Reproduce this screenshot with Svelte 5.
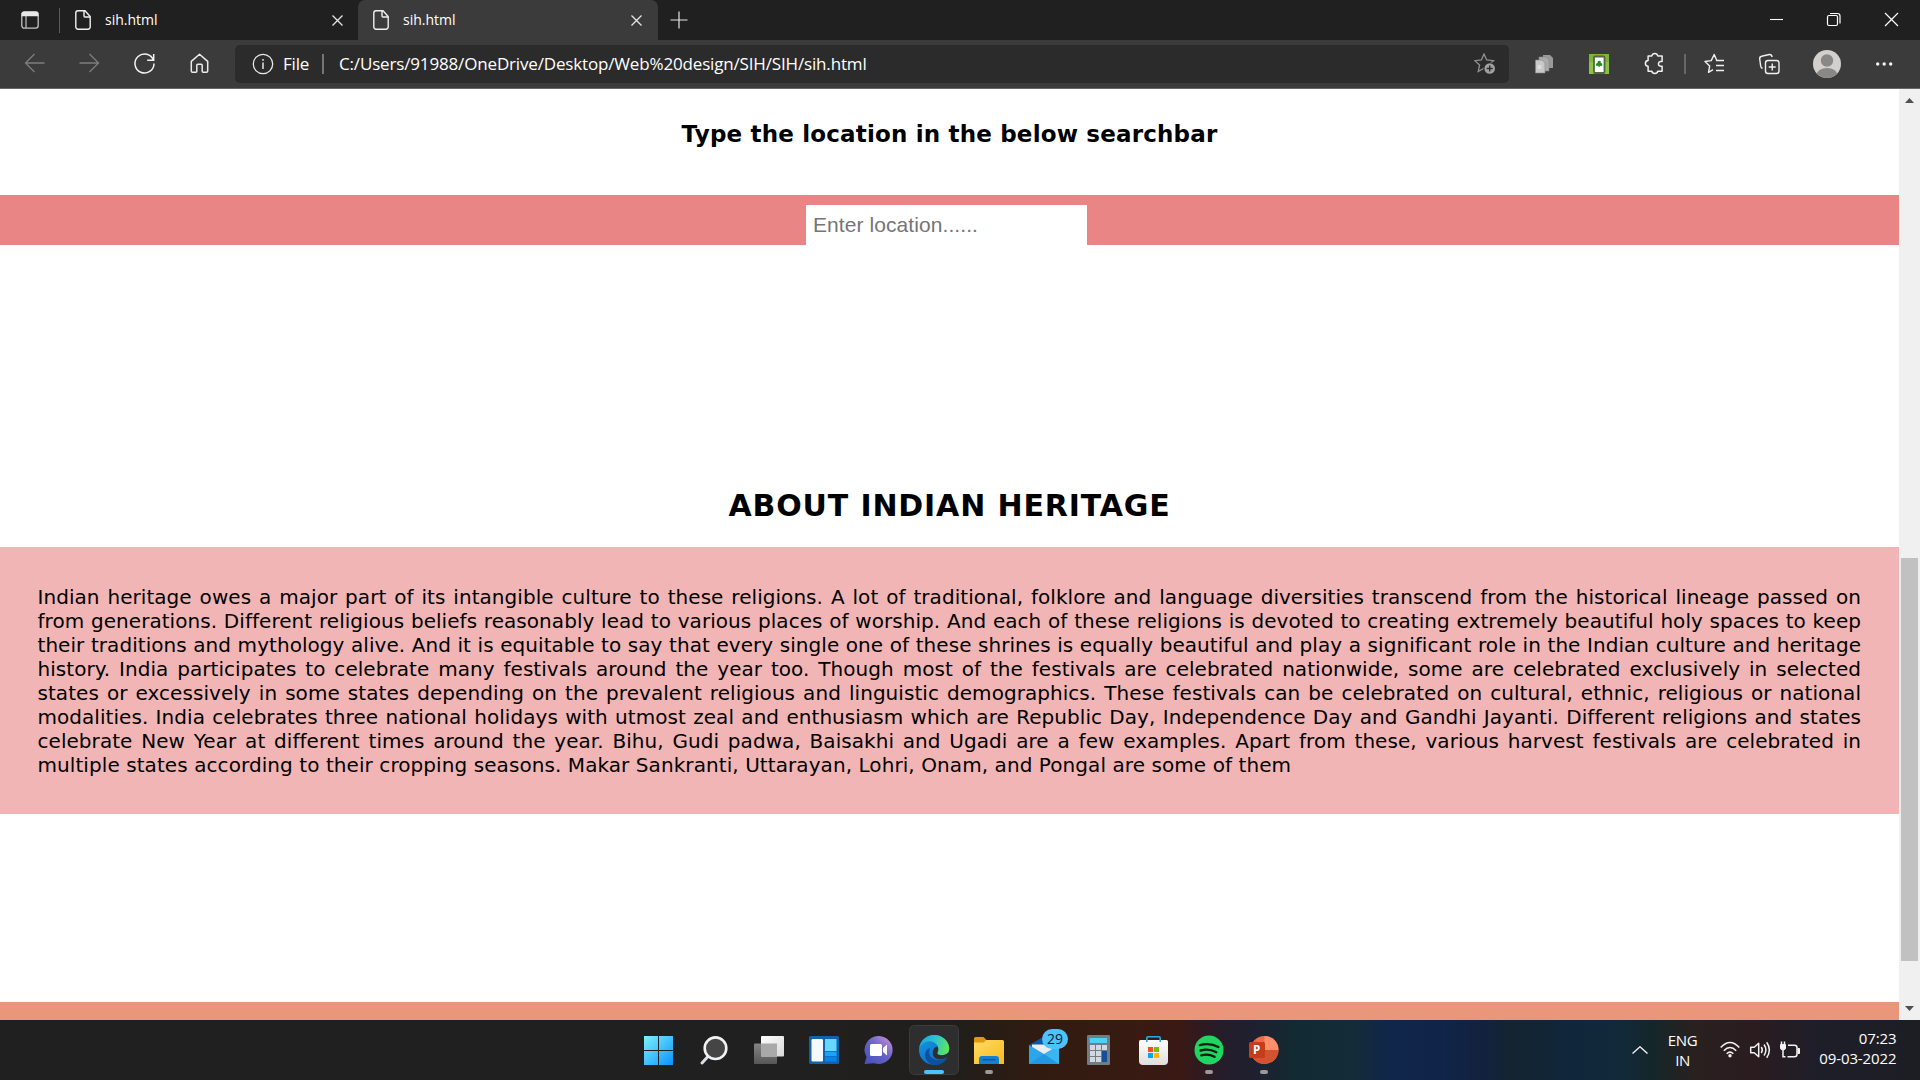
<script>
  const tabs = [
    { title: 'sih.html', active: false },
    { title: 'sih.html', active: true }
  ];

  const lines = [
    'Indian heritage owes a major part of its intangible culture to these religions. A lot of traditional, folklore and language diversities transcend from the historical lineage passed on',
    'from generations. Different religious beliefs reasonably lead to various places of worship. And each of these religions is devoted to creating extremely beautiful holy spaces to keep',
    'their traditions and mythology alive. And it is equitable to say that every single one of these shrines is equally beautiful and play a significant role in the Indian culture and heritage',
    'history. India participates to celebrate many festivals around the year too. Though most of the festivals are celebrated nationwide, some are celebrated exclusively in selected',
    'states or excessively in some states depending on the prevalent religious and linguistic demographics. These festivals can be celebrated on cultural, ethnic, religious or national',
    'modalities. India celebrates three national holidays with utmost zeal and enthusiasm which are Republic Day, Independence Day and Gandhi Jayanti. Different religions and states',
    'celebrate New Year at different times around the year. Bihu, Gudi padwa, Baisakhi and Ugadi are a few examples. Apart from these, various harvest festivals are celebrated in',
    'multiple states according to their cropping seasons. Makar Sankranti, Uttarayan, Lohri, Onam, and Pongal are some of them'
  ];
</script>

<div class="screen">
  <header class="titlebar">
    <div class="tab-menu">
      <svg width="18" height="18" viewBox="0 0 18 18">
        <rect x=".8" y=".8" width="16.4" height="16.4" rx="2.6" fill="none" stroke="#c4c4c4" stroke-width="1.3" />
        <path d="M.6 5.2V3Q.6.4 3.2.4h11.6Q17.4.4 17.4 3v2.2z" fill="#e8e8e8" />
        <path d="M5 5v12" stroke="#c4c4c4" stroke-width="1.2" />
      </svg>
    </div>
    {#each tabs as tab}
      <div class="tab" class:active={tab.active}>
        <svg class="file" width="16" height="20" viewBox="0 0 16 20" fill="none" stroke="#efefef" stroke-width="1.4">
          <path d="M3 .8h7l5.2 5.6V17a2.2 2.2 0 0 1-2.2 2.2H3A2.2 2.2 0 0 1 .8 17V3A2.2 2.2 0 0 1 3 .8z" />
          <path d="M9 1v5q0 1 1 1h5" />
        </svg>
        <span class="tab-title">{tab.title}</span>
        <svg class="tab-close" width="11" height="11" viewBox="0 0 11 11" stroke="#e6e6e6" stroke-width="1.3">
          <path d="M.5.5l10 10M10.500.5l-10 10" />
        </svg>
      </div>
    {/each}
    <svg class="plus" width="18" height="18" viewBox="0 0 18 18" stroke="#e6e6e6" stroke-width="1.2">
      <path d="M9 .5v17M.5 9h17" />
    </svg>
    <div class="window-buttons">
      <svg width="58" height="38" viewBox="0 0 58 38" stroke="#fff" stroke-width="1.1"><path d="M24 19.500h13" /></svg>
      <svg width="58" height="38" viewBox="0 0 58 38" fill="none" stroke="#fff" stroke-width="1.2">
        <rect x="23.500" y="15.500" width="10" height="10" rx="1.500" />
        <path d="M26 13.500h7.500a2.500 2.500 0 0 1 2.500 2.500v7.500" />
      </svg>
      <svg width="58" height="38" viewBox="0 0 58 38" stroke="#fff" stroke-width="1.2"><path d="M23 13l13 13m0-13l-13 13" /></svg>
    </div>
  </header>

  <div class="toolbar">
    <svg class="cell" viewBox="0 0 55 48" fill="none" stroke="#7d7d7d" stroke-width="1.3"><path d="M37.500 23h-19m9-9l-9 9 9 9" /></svg>
    <svg class="cell" viewBox="0 0 55 48" fill="none" stroke="#7d7d7d" stroke-width="1.3"><path d="M17.500 23h19m-9-9l9 9-9 9" /></svg>
    <svg class="cell" viewBox="0 0 55 48" fill="none" stroke="#f2f2f2" stroke-width="1.5"><path d="M36.500 20.500a9.500 9.500 0 1 0 .5 3M36.700 14v6.300h-6.500" /></svg>
    <svg class="cell" viewBox="0 0 55 48" fill="none" stroke="#ececec" stroke-width="1.5" stroke-linejoin="round"><path d="M27.500 14.200l8.200 7.200V31q0 1.300-1.300 1.300h-3.200q-1 0-1-1v-6.100q0-1-1-1h-3.400q-1 0-1 1v6.100q0 1-1 1h-3.200q-1.300 0-1.300-1.300v-9.600z" /></svg>

    <div class="address">
      <svg width="22" height="22" viewBox="0 0 22 22" fill="none" stroke="#e8e8e8" stroke-width="1.3">
        <circle cx="11" cy="11" r="9.700" /><path d="M11 9.500v6.500M11 6v1.800" stroke-width="1.500" />
      </svg>
      <span class="scheme">File</span>
      <i class="bar"></i>
      <span class="url">C:/Users/91988/OneDrive/Desktop/Web%20design/SIH/SIH/sih.html</span>
      <svg class="add-favorite" width="22" height="22" viewBox="0 0 22 22">
        <path d="M10 1l2.700 6 6.800.700-5.100 4.300 1.400 6.500L10 15.200l-5.800 3.300 1.400-6.500L.8 7.700 7.400 7z" fill="none" stroke="#919191" stroke-width="1.300" />
        <circle cx="15.700" cy="15.500" r="6.200" fill="#2b2b2b" /><circle cx="15.700" cy="15.500" r="5.300" fill="#a0a0a0" />
        <path d="M15.700 12.500v6m-3-3h6" stroke="#2b2b2b" stroke-width="1.400" />
      </svg>
    </div>

    <svg class="cell" viewBox="0 0 55 48">
      <path d="M26 15h7l3 3v10H26z" fill="#999" /><path d="M22 17h7l3 3v11H22z" fill="#aaa" stroke="#888" stroke-width=".6" /><path d="M18.500 20h6.500l3 3v10h-9.500z" fill="#c8c8c8" stroke="#888" stroke-width=".6" /><path d="M20.500 25h4v4h-4z" fill="#ddd" />
    </svg>
    <svg class="cell" viewBox="0 0 55 48">
      <rect x="17" y="14" width="20" height="20" fill="#8bc34a" /><path d="M17 14h20v8H17z" fill="#7cb53c" />
      <rect x="22" y="16.500" width="10.500" height="16.500" rx="1" fill="#fff" stroke="#55653f" stroke-width="1.800" />
      <path d="M27.200 20.800a1.600 1.600 0 0 1 1.400 2.200 1.500 1.500 0 1 1-.8 2.500l.4 1.300h-2l.4-1.300a1.500 1.500 0 1 1-.8-2.500 1.600 1.600 0 0 1 1.400-2.200z" fill="#17931f" />
    </svg>
    <svg class="cell" viewBox="0 0 55 48" fill="none" stroke="#f0f0f0" stroke-width="1.500" stroke-linejoin="round">
      <path d="M21.500 16.500h3.700q.6-2.500 3-2.500t3 2.500h4.300v5.700h-1.600q-2.100.4-2.100 2.300t2.100 2.300h1.600v5h-4.300q-.6 2.200-3 2.200t-3-2.200h-3.700v-5q-2.700-.3-2.700-2.800t2.700-2.800z" transform="translate(-.4 -.6)" />
    </svg>
    <i class="divider"></i>
    <svg class="cell" viewBox="0 0 55 48" fill="none" stroke="#f0f0f0" stroke-width="1.400" stroke-linejoin="round">
      <path d="M30.300 20.200h-.6L27.200 14.500l-3 6.100-6.200.9 4.700 4.400-1.200 6.500 4.500-2.700M37 20.500h-8M37 25.500h-8M37 30.500h-8" />
    </svg>
    <svg class="cell" viewBox="0 0 55 48" fill="none" stroke="#f0f0f0" stroke-width="1.400">
      <rect x="23.500" y="20.500" width="13.500" height="13" rx="2.500" /><path d="M30.250 23.500v7M26.700 27h7M20.500 28.500q-1.500-.6-1.800-2.300L17.700 19q-.2-2.300 1.900-2.700l7.700-1.800q2.300-.3 2.900 2.500" />
    </svg>
    <svg class="avatar" width="61" height="48" viewBox="0 0 61 48">
      <defs><clipPath id="face"><circle cx="30" cy="24" r="14" /></clipPath></defs>
      <g clip-path="url(#face)"><path d="M15 9h30v30H15z" fill="#d2d0ce" /><circle cx="30" cy="20.500" r="6.200" fill="#8a8886" /><ellipse cx="30" cy="35" rx="10.500" ry="7" fill="#8a8886" /></g>
    </svg>
    <svg class="more" width="53" height="48" viewBox="0 0 53 48" fill="#f2f2f2"><circle cx="19.700" cy="24" r="1.700" /><circle cx="26.200" cy="24" r="1.700" /><circle cx="32.700" cy="24" r="1.700" /></svg>
  </div>

  <main class="viewport">
    <div class="page">
      <h2>Type the location in the below searchbar</h2>
      <div class="search-band"><input placeholder="Enter location......" /></div>
      <h1>ABOUT INDIAN HERITAGE</h1>
      <section class="about">
        {#each lines as line, i}
          <div class="line" class:last={i === lines.length - 1}>{line}</div>
        {/each}
      </section>
      <div class="footer-strip"></div>
    </div>
    <div class="scrollbar">
      <svg width="9" height="5" viewBox="0 0 9 5"><path d="M0 5L4.500 0 9 5z" fill="#505050" /></svg>
      <div class="thumb"></div>
      <svg width="9" height="5" viewBox="0 0 9 5"><path d="M0 0l4.500 5L9 0z" fill="#505050" /></svg>
    </div>
  </main>

  <footer class="taskbar">
    <div class="apps">
      <svg class="app" viewBox="0 0 55 60">
        <defs><linearGradient id="win" gradientUnits="userSpaceOnUse" x1="13" y1="16" x2="42" y2="45"><stop stop-color="#7df0ff" /><stop offset="1" stop-color="#0a93fb" /></linearGradient></defs>
        <path d="M13 16h14v14H13zM28 16h14v14H28zM13 31h14v14H13zM28 31h14v14H28z" fill="url(#win)" />
      </svg>
      <svg class="app" viewBox="0 0 55 60">
        <path d="M22 36.500l-6 6.500" stroke="#dce0e4" stroke-width="3" stroke-linecap="round" /><circle cx="29.500" cy="28.200" r="10.800" fill="#454545" stroke="#f0f2f3" stroke-width="2.600" />
      </svg>
      <svg class="app" viewBox="0 0 55 60">
        <defs><linearGradient id="tv" x2="1" y2="1"><stop stop-color="#fff" /><stop offset="1" stop-color="#d8d8d8" /></linearGradient><linearGradient id="tb" x2="0" y2="1"><stop stop-color="#858585" /><stop offset="1" stop-color="#565656" /></linearGradient></defs>
        <rect x="13" y="23.500" width="23" height="20.500" rx="1" fill="url(#tb)" /><rect x="20" y="16" width="23" height="20.500" rx="1" fill="url(#tv)" /><path d="M20 23.500h16v13H20z" fill="#a9a9a9" />
      </svg>
      <svg class="app" viewBox="0 0 55 60">
        <rect x="13" y="16" width="30" height="28" rx="1.500" fill="#0f62ad" /><rect x="15.500" y="19" width="11.500" height="22.500" rx="1.200" fill="#f7f8fa" />
        <path d="M29 19h11.500v12H29z" fill="#66d6ff" /><path d="M29 31.700h11.500v4.500H29z" fill="#18a4f8" /><path d="M29 36.800h11.500v4.700H29z" fill="#0883ec" />
      </svg>
      <svg class="app" viewBox="0 0 55 60">
        <defs><linearGradient id="chat" x1=".1" y1=".9" x2=".8" y2=".1"><stop stop-color="#4b53bc" /><stop offset=".55" stop-color="#6663c6" /><stop offset="1" stop-color="#b385d5" /></linearGradient></defs>
        <path d="M28 16a14 14 0 1 1-5 27.200L13.500 44l2-7A14 14 0 0 1 28 16z" fill="url(#chat)" /><rect x="19" y="24" width="12" height="12" rx="1.500" fill="#fff" /><path d="M32 28l4-3.500v11L32 32z" fill="#fff" />
      </svg>
      <svg class="app" viewBox="0 0 55 60">
        <defs>
          <linearGradient id="e1" x1="0" y1=".4" x2="1" y2=".6"><stop stop-color="#1ba6df" /><stop offset=".5" stop-color="#31c3cf" /><stop offset="1" stop-color="#65e64f" /></linearGradient>
          <linearGradient id="e2" x2=".7" y2="1"><stop stop-color="#1999e2" /><stop offset="1" stop-color="#0869ca" /></linearGradient>
        </defs>
        <rect x="3.500" y="5.500" width="49" height="49" rx="5" fill="#2e2e2e" stroke="#3c3c3c" />
        <circle cx="28" cy="30" r="15" fill="url(#e2)" />
        <path d="M24 28c-3 7 2 12 8 12 4 0 7-1.500 9.400-2.500C38 44 32 46 27 44.800c-6-1.500-9-7-7.500-12 .8-2.500 2.200-4.200 4.500-4.800z" fill="#0e4f9e" />
        <path d="M13.200 28C14.500 20 21 15 28 15c9 0 15 6.500 15.300 13 .2 5-3.800 7.300-7.500 7.300-3 0-5.300-1.200-4.300-3 1.500-2.500 1.200-6-1.500-8.500-5-4.500-13-2.800-16.800 4.200z" fill="url(#e1)" />
        <path d="M31.500 26.500c1.200 2.300.8 4.300 0 5.800-1 1.800 1.300 3 4.300 3 2.700 0 5-1 6.500-2.700l2 3.500-3.500 1.500c-3 1.500-5.500 2-8.500 1.500-5-.8-6.500-5-5-9.200.8-2 2-3.100 4.200-3.400z" fill="#2e2e2e" />
        <rect x="18" y="50" width="20" height="4" rx="2" fill="#4cc2ff" />
      </svg>
      <svg class="app" viewBox="0 0 55 60">
        <defs><linearGradient id="fold" x2="1" y2="1"><stop stop-color="#ffdb68" /><stop offset="1" stop-color="#f8b91b" /></linearGradient></defs>
        <path d="M13 18.500q0-1.500 1.500-1.500h8l3 3H42v8H13z" fill="#dd9a0a" /><path d="M13 22.500h9.500l3-2.500h16q1.500 0 1.500 1.500V44H13z" fill="url(#fold)" />
        <path d="M18 44v-5q0-3 3-3h14q3 0 3 3v5z" fill="#1580d2" /><path d="M21.500 39.700h13" stroke="#0b5796" stroke-width="1.300" /><rect class="dot" x="24" y="50" width="8" height="4" rx="2" />
      </svg>
      <svg class="app" viewBox="0 0 55 60">
        <path d="M13 25l15-8.500L43 25v7H13z" fill="#0c56a2" /><path d="M16 24.500h24v13H16z" fill="#ececec" /><path d="M13 25v19h30V25L28 34z" fill="#2ba5eb" /><path d="M13 44l15-10 15 10z" fill="#1a88d8" opacity=".45" /><path d="M28 34l15-9v19z" fill="#4ccaf7" opacity=".45" />
        <rect x="26" y="9" width="26" height="20" rx="10" fill="#4cc2ff" /><text x="39" y="24" text-anchor="middle" class="badge">29</text>
      </svg>
      <svg class="app" viewBox="0 0 55 60">
        <rect x="16" y="15" width="23" height="30" rx="1.200" fill="#737b83" /><rect x="18.700" y="18" width="17.300" height="5" fill="#48d3f6" />
        <g fill="#d1d8df"><path d="M19 25h5v5h-5zM25 25h5v5h-5zM31 25h5v5h-5zM19 31h5v5h-5zM25 31h5v5h-5zM19 37h5v5h-5zM25 37h5v5h-5z" /></g><path d="M31 31h5v11h-5z" fill="#174f96" />
      </svg>
      <svg class="app" viewBox="0 0 55 60">
        <defs><linearGradient id="bag" x2="0" y2="1"><stop stop-color="#fff" /><stop offset="1" stop-color="#dedede" /></linearGradient></defs>
        <path d="M13 21.500q0-1.500 1.500-1.500h26q1.500 0 1.500 1.500V41q0 4-4 4H17q-4 0-4-4z" fill="url(#bag)" /><path d="M20.800 22v-4q0-1.200 1.200-1.200h11q1.200 0 1.200 1.200v4" fill="none" stroke="#29abe6" stroke-width="1.600" />
        <path d="M22 27h5v5h-5z" fill="#f25022" /><path d="M28 27h5v5h-5z" fill="#7fba00" /><path d="M22 33h5v5h-5z" fill="#00a4ef" /><path d="M28 33h5v5h-5z" fill="#ffb900" />
      </svg>
      <svg class="app" viewBox="0 0 55 60">
        <circle cx="28" cy="30" r="14.500" fill="#1ed760" /><path d="M18.800 25.200q10.200-2.800 18.600 1.800M19.500 30.500q8.500-2.300 15.800 1.700M20.300 35.300q7.200-1.800 13.200 1.500" fill="none" stroke="#101b14" stroke-width="2.400" stroke-linecap="round" /><rect class="dot" x="24" y="50" width="8" height="4" rx="2" />
      </svg>
      <svg class="app" viewBox="0 0 55 60">
        <circle cx="28.500" cy="30" r="14" fill="#ed6c47" /><path d="M28.500 16a14 14 0 0 1 14 14h-14z" fill="#ff8f6b" /><path d="M14.500 30h28a14 14 0 0 1-28 0z" fill="#d35230" /><rect x="13" y="22" width="16" height="16" rx="1.500" fill="#c43e1c" /><text x="20.500" y="34.300" text-anchor="middle" class="letter">P</text><rect class="dot" x="24" y="50" width="8" height="4" rx="2" />
      </svg>
    </div>
    <div class="tray">
      <svg width="16" height="8" viewBox="0 0 16 8" fill="none" stroke="#f0f0f0" stroke-width="1.400"><path d="M.5 7.500L8 .8l7.500 6.700" /></svg>
      <div class="lang">ENG<br />IN</div>
      <svg class="status" width="82" height="20" viewBox="0 0 82 20" fill="none" stroke="#f2f2f2" stroke-width="1.500">
        <path d="M.7 7.500q9.300-10 18.600 0M3.800 10.700q6.200-6.400 12.400 0M6.700 13.700q3.300-3.200 6.600 0" /><circle cx="10" cy="15.700" r="1.700" fill="#f2f2f2" stroke="none" />
        <path d="M30.700 7.200h3.500l4.500-4v13.600l-4.500-4h-3.500z" stroke-linejoin="round" /><path d="M41.300 7q2 3 0 6M44 4.500q3.800 5.500 0 11M46.700 2.300q5.300 7.700 0 15.400" />
        <path d="M67.500 16.800h7q2.500 0 2.500-2.500v-6.600q0-2.500-2.500-2.500h-6.500" /><path d="M78 8.500h1.500v5H78z" fill="#f2f2f2" stroke-width="1" /><path d="M60.500 4.500h5v3.500q0 2-2.500 2t-2.500-2z" fill="#f2f2f2" stroke-width="1" /><path d="M61.500 4.500v-3M64.500 4.500v-3M63 10v6.800h2.500" />
      </svg>
      <div class="clock">07:23<br />09-03-2022</div>
    </div>
  </footer>
</div>

<style>
  :global(body) { margin: 0; overflow: hidden; }
  .screen { width: 1920px; height: 1080px; display: flex; flex-direction: column; overflow: hidden; background: #fff; font-family: 'Open Sans', sans-serif; }
  svg { display: block; flex: none; }
  h1, h2 { margin: 0; color: #000; text-align: center; white-space: nowrap; font-family: 'DejaVu Sans', sans-serif; }

  .titlebar { height: 40px; flex: none; display: flex; background: #202020; }
  .tab-menu { width: 60px; box-sizing: border-box; padding: 11px 0 0 21px; position: relative; }
  .tab-menu::after { content: ''; position: absolute; right: 0; top: 8px; width: 1px; height: 25px; background: #5c5c5c; }
  .tab { width: 298px; box-sizing: border-box; display: flex; align-items: center; padding: 0 15px; color: #fff; font-size: 14px; }
  .tab.active { width: 300px; background: #3b3b3b; border-radius: 7px 7px 0 0; padding-right: 16px; }
  .tab-title { flex: 1; margin-left: 14px; line-height: 20px; padding-bottom: 1px; }
  .plus { margin: 10.5px 0 0 12px; }
  .window-buttons { margin-left: auto; display: flex; }

  .toolbar { height: 49px; box-sizing: border-box; flex: none; display: flex; background: #3b3b3b; border-bottom: 1px solid #676767; padding-left: 7px; }
  .cell { width: 55px; height: 48px; }
  .address { width: 1274px; height: 38px; box-sizing: border-box; margin: 5px 7.5px 0 8px; padding: 0 13px 0 17px; display: flex; align-items: center; border-radius: 5px; background: #2b2b2b; color: #fff; font-size: 17px; }
  .scheme { margin-left: 9px; width: 27px; letter-spacing: -.2px; padding-bottom: 2px; }
  .bar { width: 2px; height: 20px; background: #757575; margin: 0 15px 0 12px; }
  .url { letter-spacing: -.16px; flex: 1; white-space: nowrap; padding-bottom: 2px; }
  .divider { width: 2px; height: 20px; margin: 14px 1px 0 2.500px; background: #676767; flex: none; }

  .viewport { height: 931px; flex: none; display: flex; }
  .page { width: 1899px; display: flex; flex-direction: column; overflow: hidden; background: #fff; }
  h2 { padding-top: 31px; height: 75px; line-height: 28px; font-size: 23px; letter-spacing: .18px; }
  .search-band { height: 50px; box-sizing: border-box; padding-top: 10px; flex: none; background: #e98585; display: flex; justify-content: center; overflow: hidden; }
  input { width: 281px; height: 40px; margin-right: 6px; box-sizing: border-box; padding: 0 7px; border: 0; border-radius: 0; background: #fff; font: 21px 'Liberation Sans', Arial, sans-serif; letter-spacing: .08px; }
  input::placeholder { color: #757575; opacity: 1; }
  h1 { padding-top: 243px; height: 59px; line-height: 36px; font-size: 30px; letter-spacing: .85px; }
  .about { height: 267px; box-sizing: border-box; padding: 38px 38px 0 37.5px; flex: none; background: #f2b5b5; color: #000; font-family: 'DejaVu Sans', sans-serif; font-size: 20px; }
  .line { line-height: 24px; height: 24px; white-space: nowrap; letter-spacing: .05px; text-align: justify; text-align-last: justify; }
  .line.last { text-align-last: left; letter-spacing: .075px; }
  .footer-strip { margin-top: auto; height: 18px; flex: none; background: #e9967a; }

  .scrollbar { width: 21px; background: #f0f0f0; display: flex; flex-direction: column; align-items: center; box-sizing: border-box; padding: 9px 0; }
  .thumb { width: 17px; height: 403px; margin: 455px 0 auto; background: #c1c1c1; }

  .taskbar { height: 60px; flex: none; display: flex; align-items: center; background: linear-gradient(90deg, #202020 0, #202020 800px, #211e1a 960px, #311b11 1040px, #381b12 1140px, #3a1814 1180px, #261c2a 1220px, #1d2130 1260px, #122a33 1297px, #142c38 1352px, #10264a 1389px, #10244a 1438px, #12223f 1480px, #142431 1511px, #10263a 1572px, #12293a 1621px, #14262a 1652px, #2a201f 1695px, #2a1c20 1756px, #1e1e2a 1817px, #1d1d24 1920px); }
  .apps { display: flex; margin-left: 631px; }
  .app { width: 55px; height: 60px; }
  .dot { fill: #9a9a9a; }
  .badge { font: 14px 'Open Sans', sans-serif; fill: #0a1a26; }
  .letter { font: bold 11.5px 'Open Sans', sans-serif; fill: #fff; }
  .tray { margin-left: auto; padding-right: 23.5px; display: flex; align-items: center; color: #fff; font-size: 15px; line-height: 20px; }
  .lang { width: 40px; margin-left: 15px; text-align: center; letter-spacing: -.4px; padding-bottom: 1px; }
  .status { margin-left: 17px; }
  .clock { width: 84px; margin-left: 11px; text-align: right; letter-spacing: -.1px; padding-bottom: 4px; }
</style>
